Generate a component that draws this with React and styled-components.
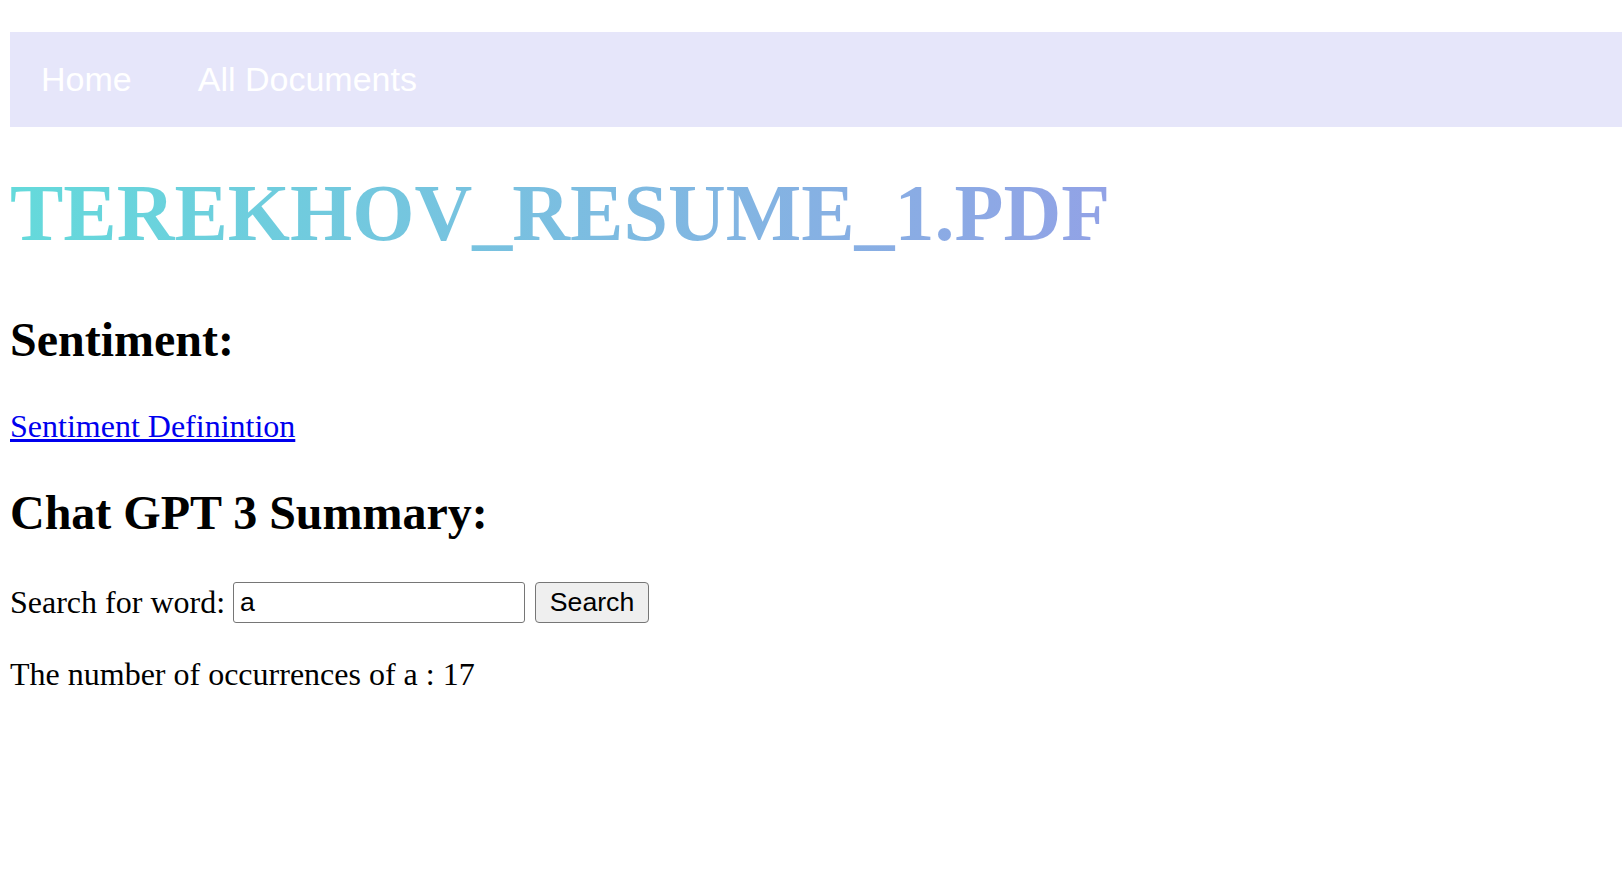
import styled, { createGlobalStyle } from "styled-components";
import { useState } from "react";

const GlobalStyle = createGlobalStyle`
  html, body {
    margin: 0;
    padding: 0;
    background: #ffffff;
  }
  body {
    font-family: "Liberation Serif", "Times New Roman", serif;
    font-size: 32px;
    color: #000;
  }
`;

export default function App() {
  const [word, setWord] = useState("a");
  const text = "a ".repeat(17);
  const count = text.split(" ").filter((w) => w === word).length;

  return (
    <>
      <GlobalStyle />
      <Page>
        <NavBar>
          <NavLink href="#">Home</NavLink>
          <NavLink href="#">All Documents</NavLink>
        </NavBar>
        <Title>TEREKHOV_RESUME_1.PDF</Title>
        <Heading>Sentiment:</Heading>
        <DefLink href="#">Sentiment Definintion</DefLink>
        <Heading $top={40}>Chat GPT 3 Summary:</Heading>
        <SearchRow>
          <span>Search for word:</span>
          <WordInput value={word} onChange={(e) => setWord(e.target.value)} />
          <SearchButton>Search</SearchButton>
        </SearchRow>
        <Result>The number of occurrences of {word} : {count}</Result>
      </Page>
    </>
  );
}

const Page = styled.div`
  padding: 32px 0 40px 10px;
  display: flex;
  flex-direction: column;
  align-items: flex-start;
`;

const NavBar = styled.nav`
  align-self: stretch;
  height: 95px;
  background: #e6e6fa;
  display: flex;
  align-items: center;
  gap: 66px;
  padding-left: 31px;
`;

const NavLink = styled.a`
  font-family: "Liberation Sans", Arial, sans-serif;
  font-size: 34px;
  color: #ffffff;
  text-decoration: none;
`;

const Title = styled.h1`
  margin: 41px 0 0 0;
  font-size: 80px;
  font-weight: bold;
  line-height: normal;
  background: linear-gradient(to right, #64dadb 0%, #92a2e6 100%);
  -webkit-background-clip: text;
  background-clip: text;
  color: transparent;
  width: fit-content;
`;

const Heading = styled.h2`
  margin: ${(p) => p.$top ?? 53}px 0 0 0;
  font-size: 48px;
  font-weight: bold;
  line-height: normal;
`;

const DefLink = styled.a`
  margin-top: 41px;
  color: #0000ee;
  text-decoration: underline;
  line-height: normal;
`;

const SearchRow = styled.div`
  margin-top: 42px;
  display: flex;
  align-items: center;
  gap: 8px;
`;

const WordInput = styled.input`
  box-sizing: border-box;
  width: 292px;
  height: 41px;
  padding: 0 6px;
  border: 1.5px solid #767676;
  border-radius: 3px;
  font-family: "Liberation Sans", Arial, sans-serif;
  font-size: 26.67px;
  color: #000;
  outline: none;
`;

const SearchButton = styled.button`
  box-sizing: border-box;
  margin-left: 2px;
  width: 114px;
  height: 41px;
  padding: 0 12px;
  background: #efefef;
  border: 1.5px solid #767676;
  border-radius: 4px;
  font-family: "Liberation Sans", Arial, sans-serif;
  font-size: 26.67px;
  color: #000;
`;

const Result = styled.p`
  margin: 33px 0 0 0;
  line-height: normal;
`;
